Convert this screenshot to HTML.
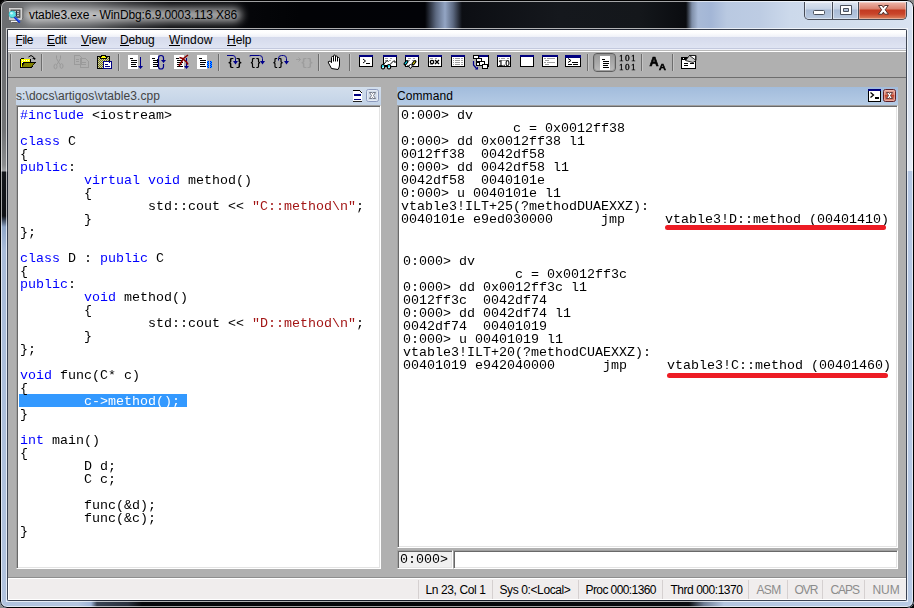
<!DOCTYPE html>
<html><head><meta charset="utf-8"><title>vtable3.exe - WinDbg:6.9.0003.113 X86</title>
<style>
*{box-sizing:border-box;margin:0;padding:0}
html,body{width:914px;height:608px;overflow:hidden;background:#000}
body{position:relative;font-family:"Liberation Sans",sans-serif;font-size:12px;color:#000}
.a{position:absolute}
#frame{position:absolute;left:0;top:0;width:914px;height:608px;overflow:hidden;background:#000}
#glass{position:absolute;left:0;top:0;width:914px;height:608px;border-radius:7px;overflow:hidden;background:#0b0d11}
#client{position:absolute;left:8px;top:30px;width:898px;height:570px;background:#b0b0b0}
#menubar{position:absolute;left:0;top:0;width:898px;height:20px;background:linear-gradient(#fff 0,#fdfdfe 3px,#eef0f8 7px,#d5daec 7px,#dfe4f2 18px,#c3c9de 18px,#c3c9de 19px,#f0f2f9 19px,#f0f2f9 20px)}
.mi{position:absolute;top:3px;height:14px;line-height:14px;font-size:12px;white-space:nowrap}
.mi u{text-decoration:none;display:inline-block;position:relative}
.mi u:after{content:"";position:absolute;left:0;right:0;top:12px;height:1px;background:#000}
.sep{position:absolute;top:54px;width:2px;height:17px;border-left:1px solid #6d6d6d;border-right:1px solid #c4c4c4}
.pane{position:absolute;background:#fff}
.pt{position:absolute;height:18px;font-size:12px;line-height:19px;white-space:nowrap;overflow:hidden}
pre{font-family:"Liberation Mono",monospace;font-size:13.33px;line-height:13px;position:absolute;white-space:pre;color:#000;will-change:transform}
.k{color:#0000ff}.s{color:#a31515}.w{color:#fff}
.st{position:absolute;top:580px;height:20px;line-height:20px;font-size:12px;white-space:nowrap}
.ss{position:absolute;top:580px;width:1px;height:19px;background:#d5d0d0}
.red{position:absolute;height:5px;border-radius:2.5px;background:#ed1c24}
</style></head><body>
<div id="frame">
<div class="a" style="left:0;top:603px;width:5px;height:5px;background:#8e8e8e"></div>
<div class="a" style="left:909px;top:0;width:5px;height:5px;background:#8a8a8a"></div>
<div id="glass">
<div class="a" style="left:0;top:0;width:914px;height:30px;background:linear-gradient(90deg,#6b6d70 0,#6e7073 30px,#55575a 90px,#2a2b2e 130px,#0a0b0e 170px,#020306 300px,#020307 425px,#5d6a82 436px,#93a5c4 445px,#5d6a82 453px,#0c0e13 462px,#15181d 560px,#14171b 640px,#0a0c10 686px,#7f8fa9 692px,#a8bad7 698px,#a3b6d6 711px,#b9c9e1 727px,#bdcce3 760px,#ccd9eb 790px,#d0dcec 830px,#d9e3f1 914px)"></div>
<div class="a" style="left:24px;top:8px;width:218px;height:14px;border-radius:7px;background:rgba(255,255,255,.66);filter:blur(4.5px)"></div>
<div class="a" style="left:0;top:30px;width:8px;height:578px;background:linear-gradient(#6c6e71 0,#707274 100px,#8a8c8e 135px,#a0a2a4 141px,#14171b 142px,#101216 186px,#3b4658 190px,#8fa6c8 197px,#a9bcd9 220px,#b1c3de 578px)"></div>
<div class="a" style="left:906px;top:30px;width:8px;height:578px;background:linear-gradient(#cfdbec 0,#d6e0ef 60px,#e6edf7 141px,#b5c7e3 141px,#b7c9e4 578px)"></div>
<div class="a" style="left:0;top:600px;width:914px;height:8px;background:linear-gradient(90deg,#b1c3de 0,#b5c6e0 78px,#9fb4d6 91px,#3a4454 97px,#2a313e 128px,#07080b 142px,#050608 400px,#0a0c10 689px,#6f7d94 704px,#b4c5df 724px,#b7c9e4 800px,#b9cbe5 914px)"></div>
<div class="a" style="left:1px;top:1px;width:912px;height:606px;border-radius:6px;border:1px solid rgba(255,255,255,.62)"></div>
<div class="a" style="left:0;top:0;width:914px;height:608px;border-radius:7px;border:1px solid #000"></div>
<div class="a" style="left:6px;top:28px;width:902px;height:574px;border:1px solid rgba(255,255,255,.68)"></div>
<div class="a" style="left:7px;top:29px;width:900px;height:572px;border:1px solid rgba(28,34,48,.8);border-radius:1.5px"></div>
</div>
<div class="a" style="left:29px;top:7px;height:16px;line-height:16px;font-size:12px;white-space:nowrap;letter-spacing:-0.105px">vtable3.exe - WinDbg:6.9.0003.113 X86</div>
<svg class="a" style="left:8px;top:6px" width="18" height="18" viewBox="8 6 18 18">
<path d="M9.500 8.500l1-1h12.500v10.500l-1.500 1.500h-12z" fill="#8c8c8c" stroke="#5a5a5a" stroke-width=".6"/>
<rect x="9.500" y="8.500" width="12" height="11" fill="#c9c9c9" stroke="#e4e4e4" stroke-width=".7"/>
<rect x="11" y="10" width="9" height="7.500" fill="#6a6a6a" stroke="#3c3c3c" stroke-width=".7"/>
<path d="M14 11.500h5M14 13.500h5M15 15.500h4" stroke="#d8d8d8" stroke-width=".8"/><path d="M16.500 11v5" stroke="#2a2a40" stroke-width="1"/>
<path d="M11 21.500h6.500" stroke="#f2f2f2" stroke-width="1.400"/><path d="M12 22.500h5" stroke="#555" stroke-width=".8"/>
<circle cx="12.300" cy="14.300" r="3.300" fill="#5fe3e8" stroke="#35b7c4" stroke-width=".7"/><circle cx="11.500" cy="13.300" r="1.300" fill="#c4fafb"/>
<path d="M15.200 17.800l4 4" stroke="#0a2fd6" stroke-width="2.200" stroke-linecap="round"/><path d="M15.600 17.400l4 4" stroke="#5a86ff" stroke-width=".7" stroke-linecap="round"/></svg>
<div class="a" style="left:804px;top:2px;width:103px;height:18px;border:1px solid #474c58;border-top:none;border-radius:0 0 5px 5px;overflow:hidden;background:#474c58">
<div class="a" style="left:0;top:0;width:27px;height:17px;background:linear-gradient(#dde5f0 0,#c6d3e5 7px,#a8bad5 8px,#b9c9e0 17px);box-shadow:inset 0 0 0 1px rgba(255,255,255,.45)"></div>
<div class="a" style="left:28px;top:0;width:25px;height:17px;background:linear-gradient(#dde5f0 0,#c6d3e5 7px,#a8bad5 8px,#b9c9e0 17px);box-shadow:inset 0 0 0 1px rgba(255,255,255,.45)"></div>
<div class="a" style="left:54px;top:0;width:47px;height:17px;background:linear-gradient(#edb8ac 0,#d9806d 7px,#c23a20 8px,#c9452a 12px,#dc8560 17px);box-shadow:inset 0 0 0 1px rgba(255,255,255,.35)"></div>
</div>
<svg class="a" style="left:804px;top:0" width="103" height="20" viewBox="804 0 103 20">
<rect x="813.5" y="10.5" width="11" height="4" rx="1" fill="#fff" stroke="#4a505c"/>
<path d="M840.5 5.5h11v9h-11z M843.5 8.5v3h5v-3z" fill="#fff" fill-rule="evenodd" stroke="#4a505c"/>
<path d="M878.500 5.500h3.700l1.200 2 1.200-2h3.700l-3.100 4.300 3.200 4.400h-3.800l-1.200-2.100-1.200 2.100h-3.800l3.200-4.400z" fill="#fff" stroke="#50302c" stroke-width="1" stroke-linejoin="round"/>
</svg>
<div id="client"><div id="menubar"></div></div>
<span class="mi" style="left:15.5px;top:33px;letter-spacing:-0.450px"><u>F</u>ile</span>
<span class="mi" style="left:47px;top:33px;letter-spacing:-0.300px"><u>E</u>dit</span>
<span class="mi" style="left:81px;top:33px;letter-spacing:-0.200px"><u>V</u>iew</span>
<span class="mi" style="left:120px;top:33px;letter-spacing:-0.180px"><u>D</u>ebug</span>
<span class="mi" style="left:169px;top:33px;letter-spacing:0.133px"><u>W</u>indow</span>
<span class="mi" style="left:227px;top:33px;letter-spacing:-0.050px"><u>H</u>elp</span>
<div class="a" style="left:8px;top:50px;width:898px;height:1px;background:#b8b8b8"></div>
<div class="a" style="left:8px;top:51px;width:898px;height:1px;background:#fff"></div>
<div class="a" style="left:8px;top:77px;width:898px;height:1px;background:#6d6d6d"></div>
<div class="sep" style="left:10px"></div>
<div class="sep" style="left:41px"></div>
<div class="sep" style="left:118px"></div>
<div class="sep" style="left:218px"></div>
<div class="sep" style="left:318px"></div>
<div class="sep" style="left:349px"></div>
<div class="sep" style="left:587px"></div>
<div class="sep" style="left:641px"></div>
<div class="sep" style="left:672px"></div>
<svg class="a" style="left:0;top:52px;will-change:transform" width="914" height="25" viewBox="0 52 914 25" shape-rendering="crispEdges">
<defs>
<pattern id="dth" x="0" y="0" width="2" height="2" patternUnits="userSpaceOnUse"><rect width="2" height="2" fill="#c0c0c0"/><rect width="1" height="1" fill="#808000"/><rect x="1" y="1" width="1" height="1" fill="#808000"/></pattern>
<pattern id="bdt" x="0" y="0" width="2" height="2" patternUnits="userSpaceOnUse"><rect width="2" height="2" fill="#0000ff"/><rect width="1" height="1" fill="#00c8ff"/><rect x="1" y="1" width="1" height="1" fill="#00c8ff"/></pattern>
<g id="pg"><rect x="0" y="0" width="10" height="14" fill="#fff"/><path d="M2 3.500h3M3 5.500h6M3 7.500h6M3 9.500h5M3 11.500h6" stroke="#000" fill="none"/></g>
<g id="win"><rect x="0.500" y="0.500" width="13" height="11" fill="#fff" stroke="#000"/><rect x="0" y="0" width="14" height="2" fill="#000080"/></g>
<g id="win16"><rect x="0.500" y="0.500" width="15" height="11" fill="#fff" stroke="#000"/><rect x="0" y="0" width="16" height="2" fill="#000080"/></g>
<linearGradient id="prs" x1="0" y1="0" x2="0" y2="1"><stop offset="0" stop-color="#989898"/><stop offset=".5" stop-color="#a9a9a9"/><stop offset="1" stop-color="#bcbcbc"/></linearGradient>
</defs>
<!-- open -->
<g>
<path d="M28.500 57q2.500-3 5 0l.8 1.500" stroke="#000" fill="none" shape-rendering="auto"/><path d="M32 58h3.500l-.5 2z" fill="#000" shape-rendering="auto"/>
<path d="M20 59h1v-1h3v1h7v3h5l-4.500 6h-11.500z" fill="#000"/>
<rect x="21" y="59" width="9" height="3" fill="#ffff00"/><rect x="21" y="62" width="1" height="5" fill="#ffff00"/>
<rect x="22" y="60" width="1" height="1" fill="#fff"/><rect x="22" y="62" width="1" height="1" fill="#fff"/><rect x="24" y="60" width="1" height="1" fill="#fff"/><rect x="26" y="60" width="1" height="1" fill="#fff"/><rect x="28" y="60" width="1" height="1" fill="#fff"/>
<path d="M24.500 63h10l-3.300 4h-9.200z" fill="#808000" shape-rendering="auto"/>
</g>
<!-- cut (disabled) -->
<g stroke="#999" fill="none" shape-rendering="auto"><path d="M56.500 55.500v3l3.500 6M60.500 55.500v3l-3.500 6"/><ellipse cx="55.500" cy="66.500" rx="1.500" ry="2.300"/><ellipse cx="61.500" cy="66" rx="1.500" ry="2.300"/></g>
<!-- copy (disabled) -->
<g stroke="#9b9b9b" fill="none"><path d="M74.500 55.500h5l2 2v7h-7z"/><path d="M80.500 58.500h5l3 3v6h-8z"/><path d="M76 59.500h3M76 61.500h3M82 62.500h4M82 64.500h4"/></g>
<!-- paste -->
<g>
<rect x="97" y="56" width="13" height="13" fill="#000"/><rect x="98" y="57" width="11" height="11" fill="url(#dth)"/>
<rect x="101" y="55" width="5" height="1" fill="#000"/><rect x="100" y="56" width="7" height="3" fill="#000"/><rect x="102" y="56" width="3" height="1" fill="#ffff00"/><rect x="101" y="57" width="5" height="1" fill="#ffff00"/>
<rect x="103" y="61" width="9" height="8" fill="#000080"/><rect x="104" y="62" width="7" height="6" fill="#fff"/><rect x="109" y="61" width="3" height="2" fill="#000080"/><rect x="110" y="62" width="1" height="1" fill="#fff"/>
<rect x="105" y="64" width="3" height="1" fill="#000080"/><rect x="105" y="66" width="5" height="1" fill="#000080"/>
</g>
<!-- run / go -->
<use href="#pg" x="128" y="55"/><path d="M140.500 57v11" stroke="#00008b" fill="none"/><path d="M138 66h5l-2.500 3z" fill="#00008b" shape-rendering="auto"/>
<!-- restart -->
<use href="#pg" x="150" y="55"/><rect x="158" y="55" width="3" height="14" fill="#b0b0b0"/><rect x="157" y="59" width="1" height="1" fill="#000"/><rect x="157" y="61" width="1" height="1" fill="#000"/><rect x="157" y="65" width="1" height="1" fill="#000"/>
<path d="M163.500 64v2.500q0 2.500-2.500 2.500t-2.500-2.500v-8.500q0-2.500 2.500-2.500t2.500 2.500v2" stroke="#00008b" stroke-width="1.200" fill="none" shape-rendering="auto"/><path d="M161 60h5l-2.500 3z" fill="#00008b" shape-rendering="auto"/>
<!-- stop -->
<use href="#pg" x="174" y="55"/><path d="M186.500 58v9" stroke="#00008b" fill="none"/><path d="M184 66h5l-2.500 3z" fill="#00008b" shape-rendering="auto"/>
<path d="M188 55l-4.500 3.500-4.500 7.500M179.500 57.500l3 1 4 3.500 1.500 2.500" stroke="#8b0000" stroke-width="1.500" fill="none" shape-rendering="auto"/>
<!-- break -->
<use href="#pg" x="197" y="55"/><rect x="207" y="61" width="2" height="7" fill="url(#bdt)"/><rect x="210" y="61" width="2" height="7" fill="url(#bdt)"/>
<!-- step into -->
<g shape-rendering="auto">
<text x="227.500" y="66.300" font-family="Liberation Mono,monospace" font-weight="bold" font-size="11.500" fill="#000" textLength="15">{ }</text>
<path d="M227 55.500h6q2.500 0 2.500 3v3" stroke="#00008b" fill="none"/><path d="M233 61h5l-2.500 3.500z" fill="#00008b"/>
<!-- step over -->
<text x="250" y="66.300" font-family="Liberation Mono,monospace" font-weight="bold" font-size="11.500" fill="#000" textLength="11" lengthAdjust="spacingAndGlyphs">{}</text>
<path d="M250 56.500v-1h9.500q3 0 3 3v3" stroke="#00008b" fill="none"/><path d="M260 61h5l-2.500 3.500z" fill="#00008b"/>
<!-- step out -->
<text x="272.500" y="66.300" font-family="Liberation Mono,monospace" font-weight="bold" font-size="11.500" fill="#000" textLength="11" lengthAdjust="spacingAndGlyphs">{}</text>
<path d="M278.500 60.500v-2q0-3 3-3h2q3 0 3 3v3" stroke="#00008b" fill="none"/><path d="M284 61h5l-2.500 3.500z" fill="#00008b"/>
<!-- run to cursor (disabled) -->
<text y="66.300" font-family="Liberation Mono,monospace" font-weight="bold" font-size="11.500" fill="#9d9d9d"><tspan x="300.500">{</tspan><tspan x="306.500">}</tspan></text>
<path d="M296 59.500h5M298.500 57.500l2 2-2 2" stroke="#9d9d9d" fill="none"/>
</g>
<!-- hand -->
<g shape-rendering="auto"><path d="M331.500 68.500l-3-5.500q-.8-1.500 .5-1.800t2.500 1.500v-5.200q0-1 1-1t1 1v-1.500q0-1 1-1t1 1v1q0-1 1-1t1 1v1.500q0-1 1-1t1 1v6.500q0 2-1.500 4.500z" fill="#fff" stroke="#000"/><path d="M333.500 57.500v4M335.500 56.500v5M337.500 57.500v4" stroke="#000" fill="none"/></g>
<!-- command -->
<use href="#win" x="359" y="55"/><path d="M363 59l2.500 2-2.500 2" stroke="#000" fill="none" shape-rendering="auto"/><rect x="366" y="63" width="4" height="1" fill="#000"/>
<!-- watch -->
<use href="#win" x="383" y="55"/><path d="M385 58.500h3M390 58.500h2M385 60.500h2M389 60.500h2" stroke="#a0a0a0" fill="none"/>
<g shape-rendering="auto"><path d="M383.500 64.500l3.500-4 1.500 1M390 64.500l3.500-3.500h1.500v2" stroke="#000" fill="none"/><ellipse cx="383" cy="66.800" rx="1.700" ry="2.200" fill="#fff" stroke="#000" stroke-width="1.100"/><ellipse cx="389" cy="66.800" rx="1.700" ry="2.200" fill="#fff" stroke="#000" stroke-width="1.100"/><rect x="382" y="65.300" width="1.600" height="2" fill="#00e5ff"/><rect x="388" y="65.300" width="1.600" height="2" fill="#00e5ff"/><path d="M384.700 65.500h2.600" stroke="#000"/></g>
<!-- locals -->
<use href="#win" x="405" y="55"/><path d="M408 58.500h3M413 58.500h2M408 60.500h2M412 60.500h2" stroke="#a0a0a0" fill="none"/>
<g shape-rendering="auto"><path d="M405 64l2-2.500M413 64l2-2.500" stroke="#000" stroke-width="3" stroke-linecap="round"/><path d="M405 64l2-2.500" stroke="#00e5ff" stroke-width="1.200"/><path d="M413 64l2-2.500" stroke="#e8d800" stroke-width="1.200"/><path d="M407 66l2 0 1.500-2 2 2-2 2.500-2-2.500" stroke="#000" fill="#fff"/></g>
<!-- registers -->
<use href="#win" x="428" y="55"/><path d="M430 58.500h3M435 58.500h2M430 64.500h3" stroke="#a0a0a0" fill="none"/>
<g shape-rendering="auto"><circle cx="432" cy="62" r="1.700" stroke="#000" stroke-width="1.300" fill="none"/><path d="M435 60l4 4M439 60l-4 4" stroke="#000" stroke-width="1.300"/></g>
<!-- memory -->
<use href="#win" x="451" y="55"/><path d="M453 58.500h1M455 58.500h5M461 58.500h2M453 60.500h1M455 60.500h5M461 60.500h2M453 62.500h1M455 62.500h5M461 62.500h2M453 64.500h1M455 64.500h5M461 64.500h2" stroke="#a0a0a0" fill="none"/>
<!-- call stack -->
<rect x="479" y="55" width="10" height="2" fill="#000080"/><rect x="480" y="57" width="9" height="9" fill="#fff"/><rect x="488" y="55" width="1" height="12" fill="#000"/>
<g fill="#fff" stroke="#000"><rect x="473.500" y="55.500" width="5" height="3"/><rect x="476.500" y="58.500" width="5" height="3"/><rect x="476.500" y="62.500" width="3" height="3"/><rect x="479.500" y="61.500" width="5" height="4"/><rect x="482.500" y="64.500" width="5" height="4"/></g>
<path d="M473.500 61v4l3 3.500" stroke="#00008b" stroke-width="1.200" fill="none" shape-rendering="auto"/><path d="M475 69.500h3v-3z" fill="#00008b" shape-rendering="auto"/>
<!-- fp regs -->
<use href="#win" x="497" y="55"/><path d="M499 58.500h1M501 58.500h4M507 58.500h2M499 60.500h1M501 60.500h8" stroke="#a0a0a0" fill="none"/>
<text x="498.500" y="66.200" font-family="Liberation Sans,sans-serif" font-weight="bold" font-size="8.200" fill="#000" shape-rendering="auto" text-rendering="geometricPrecision">1.0</text>
<!-- blank -->
<use href="#win" x="520" y="55"/>
<!-- disasm -->
<use href="#win16" x="542" y="55"/><path d="M544 58.500h2M547 58.500h8M545 60.500h4M544 62.500h2M547 62.500h8M545 64.500h4" stroke="#a0a0a0" fill="none"/>
<!-- scratch -->
<use href="#win16" x="565" y="55"/><rect x="565" y="55" width="16" height="3" fill="#000080"/><path d="M568 58.500l3 2-3 2" stroke="#000" fill="none" shape-rendering="auto"/><path d="M572 62.500h6M568 64.500h4M573 64.500h5" stroke="#000" fill="none"/>
<!-- source mode pressed -->
<rect x="593.500" y="53.500" width="22" height="18" rx="3.500" fill="url(#prs)" stroke="#5e5e5e" shape-rendering="auto"/><rect x="594.500" y="54.500" width="20" height="16" rx="2.500" fill="none" stroke="#8d8d8d" stroke-opacity=".6" shape-rendering="auto"/>
<use href="#pg" x="600" y="56"/>
<!-- 101 -->
<g shape-rendering="auto" font-family="Liberation Serif,serif" font-size="9.200" fill="#000" stroke="#000" stroke-width=".3"><text x="619" y="61.300" textLength="16.500">101</text><text x="619" y="70.300" textLength="16.500">101</text></g>
<!-- AA -->
<g shape-rendering="auto" font-family="Liberation Sans,sans-serif" font-weight="bold" fill="#000"><text x="649.600" y="66" font-size="12.500" stroke="#000" stroke-width=".7">A</text><text x="659" y="70" font-size="9.500" stroke="#000" stroke-width=".6">A</text></g>
<!-- options -->
<rect x="681.500" y="57.500" width="14" height="11" fill="#fff" stroke="#000"/><rect x="681" y="57" width="15" height="3" fill="#000"/><rect x="683" y="58" width="1" height="1" fill="#fff"/>
<path d="M684 63.500h4M690 63.500h4M684 65.500h4" stroke="#000" fill="none"/>
<g shape-rendering="auto"><path d="M685.500 60.500l4-5h6.500v5l-3 2z" fill="#c8c8c8" stroke="#000" stroke-width=".8"/><path d="M689.500 55.500h6v4.500z" fill="#fff" stroke="#000" stroke-width=".8"/></g>
</svg>

<div class="pt" style="left:16px;top:87px;width:365px;color:#434343;background:linear-gradient(#d2deec,#c3d3e7)"><span style="letter-spacing:0.070px">s:\docs\artigos\vtable3.cpp</span></div>
<div class="pane" style="left:16px;top:105px;width:365px;height:464px;border-top:1px solid #a0a0a0;border-left:1px solid #a0a0a0;border-right:1px solid #fff;border-bottom:1px solid #fff;box-shadow:inset 1px 1px 0 #696969,inset -1px -1px 0 #e3e3e3"></div>
<div class="a" style="left:19px;top:394px;width:168px;height:13px;background:#3399ff"></div>
<pre style="left:20px;top:109px"><span class="k">#include</span> &lt;iostream&gt;

<span class="k">class</span> C
{
<span class="k">public</span>:
        <span class="k">virtual</span> <span class="k">void</span> method()
        {
                std::cout &lt;&lt; <span class="s">"C::method\n"</span>;
        }
};

<span class="k">class</span> D : <span class="k">public</span> C
{
<span class="k">public</span>:
        <span class="k">void</span> method()
        {
                std::cout &lt;&lt; <span class="s">"D::method\n"</span>;
        }
};

<span class="k">void</span> func(C* c)
{
        <span class="w">c-&gt;method();</span>
}

<span class="k">int</span> main()
{
        D d;
        C c;

        func(&amp;d);
        func(&amp;c);
}</pre>
<div class="pt" style="left:397px;top:87px;width:501px;background:linear-gradient(#a2bcdc,#b5cbe5)"><span style="letter-spacing:0.086px">Command</span></div>
<div class="pane" style="left:397px;top:105px;width:501px;height:443px;border-top:1px solid #a0a0a0;border-left:1px solid #a0a0a0;border-right:1px solid #fff;border-bottom:1px solid #fff;box-shadow:inset 1px 1px 0 #696969,inset -1px -1px 0 #e3e3e3"></div>
<pre style="left:401px;top:109px">0:000&gt; dv
              c = 0x0012ff38
0:000&gt; dd 0x0012ff38 l1
0012ff38  0042df58
0:000&gt; dd 0042df58 l1
0042df58  0040101e
0:000&gt; u 0040101e l1
vtable3!ILT+25(?methodDUAEXXZ):
0040101e e9ed030000      jmp     vtable3!D::method (00401410)</pre>
<pre style="left:403px;top:255px">0:000&gt; dv
              c = 0x0012ff3c
0:000&gt; dd 0x0012ff3c l1
0012ff3c  0042df74
0:000&gt; dd 0042df74 l1
0042df74  00401019
0:000&gt; u 00401019 l1
vtable3!ILT+20(?methodCUAEXXZ):
00401019 e942040000      jmp     vtable3!C::method (00401460)</pre>
<div class="red" style="left:665px;top:225px;width:221px"></div>
<div class="red" style="left:667px;top:373px;width:221px"></div>
<svg class="a" style="left:350px;top:87px;will-change:transform" width="32" height="18" viewBox="350 87 32 18">
<g shape-rendering="crispEdges"><rect x="353" y="91" width="9" height="10" fill="#fff"/><rect x="353" y="90" width="7" height="1" fill="#000"/><rect x="360" y="91" width="1" height="1" fill="#000"/><rect x="361" y="92" width="1" height="1" fill="#000"/>
<rect x="354" y="94" width="7" height="2" fill="#000080"/><rect x="354" y="99" width="7" height="1" fill="#000080"/><rect x="353" y="101" width="9" height="1" fill="#222"/></g>
<rect x="366.500" y="89.500" width="12" height="12" rx="2" fill="#d3ddea" stroke="#8c9abd"/><rect x="367.500" y="90.500" width="10" height="10" rx="1" fill="none" stroke="#e6ecf5"/>
<path d="M369.500 92.500h2.400l.6 1 .6-1h2.400l-2 3 2 3h-2.400l-.6-1-.6 1h-2.400l2-3z" fill="#fff" stroke="#666c7c" stroke-width=".9" stroke-linejoin="round"/>
</svg>
<svg class="a" style="left:866px;top:87px;will-change:transform" width="32" height="18" viewBox="866 87 32 18">
<g shape-rendering="crispEdges"><rect x="868.500" y="89.500" width="12" height="12" fill="#fff" stroke="#000"/><rect x="868" y="89" width="13" height="2" fill="#000080"/><rect x="875" y="98" width="4" height="1" fill="#000"/><rect x="875" y="97" width="4" height="1" fill="#000"/></g>
<path d="M870.500 92.500l3 2.500-3 2.500" stroke="#000" stroke-width="1.300" fill="none"/>
<defs><linearGradient id="cr" x1="0" y1="0" x2="0" y2="1"><stop offset="0" stop-color="#eab3a8"/><stop offset=".45" stop-color="#d5735f"/><stop offset=".5" stop-color="#c4452c"/><stop offset="1" stop-color="#e09a8c"/></linearGradient></defs>
<rect x="883.500" y="89.500" width="12" height="12" rx="2" fill="url(#cr)" stroke="#5e2028"/><rect x="884.500" y="90.500" width="10" height="10" rx="1" fill="none" stroke="#f0c0b8" stroke-opacity=".6"/>
<path d="M886.500 92.500h2.400l.6 1 .6-1h2.400l-2 3 2 3h-2.400l-.6-1-.6 1h-2.400l2-3z" fill="#fff" stroke="#5a3030" stroke-width=".9" stroke-linejoin="round"/>
</svg>
<div class="a" style="left:397px;top:550px;width:56px;height:19px;background:#f0f0f0;border-top:1px solid #a0a0a0;border-left:1px solid #a0a0a0;border-right:1px solid #fff;border-bottom:1px solid #fff;box-shadow:inset 1px 1px 0 #696969,inset -1px -1px 0 #e3e3e3"></div>
<pre style="left:400px;top:553px">0:000&gt;</pre>
<div class="a" style="left:453px;top:550px;width:445px;height:19px;background:#fff;border-top:1px solid #a0a0a0;border-left:1px solid #a0a0a0;border-right:1px solid #fff;border-bottom:1px solid #fff;box-shadow:inset 1px 1px 0 #696969,inset -1px -1px 0 #e3e3e3"></div>
<div class="a" style="left:8px;top:577px;width:898px;height:1px;background:#8e8e8e"></div>
<div class="a" style="left:8px;top:578px;width:898px;height:22px;background:#f0eded;border-top:1px solid #fff;border-left:1px solid #fff;border-bottom:1px solid #fff"></div>
<div class="ss" style="left:418px"></div>
<div class="ss" style="left:492px"></div>
<div class="ss" style="left:578px"></div>
<div class="ss" style="left:662px"></div>
<div class="ss" style="left:748px"></div>
<div class="ss" style="left:787px"></div>
<div class="ss" style="left:822px"></div>
<div class="ss" style="left:864px"></div>
<span class="st" style="left:425.5px;color:#000;letter-spacing:-0.392px">Ln 23, Col 1</span>
<span class="st" style="left:499.5px;color:#000;letter-spacing:-0.392px">Sys 0:&lt;Local&gt;</span>
<span class="st" style="left:585.5px;color:#000;letter-spacing:-0.585px">Proc 000:1360</span>
<span class="st" style="left:670.5px;color:#000;letter-spacing:-0.469px">Thrd 000:1370</span>
<span class="st" style="left:756.5px;color:#8c8c8c;letter-spacing:-0.667px">ASM</span>
<span class="st" style="left:794.5px;color:#8c8c8c;letter-spacing:-1.000px">OVR</span>
<span class="st" style="left:830.5px;color:#8c8c8c;letter-spacing:-1.050px">CAPS</span>
<span class="st" style="left:872.5px;color:#8c8c8c;letter-spacing:-0.100px">NUM</span>
</div>
</body></html>
